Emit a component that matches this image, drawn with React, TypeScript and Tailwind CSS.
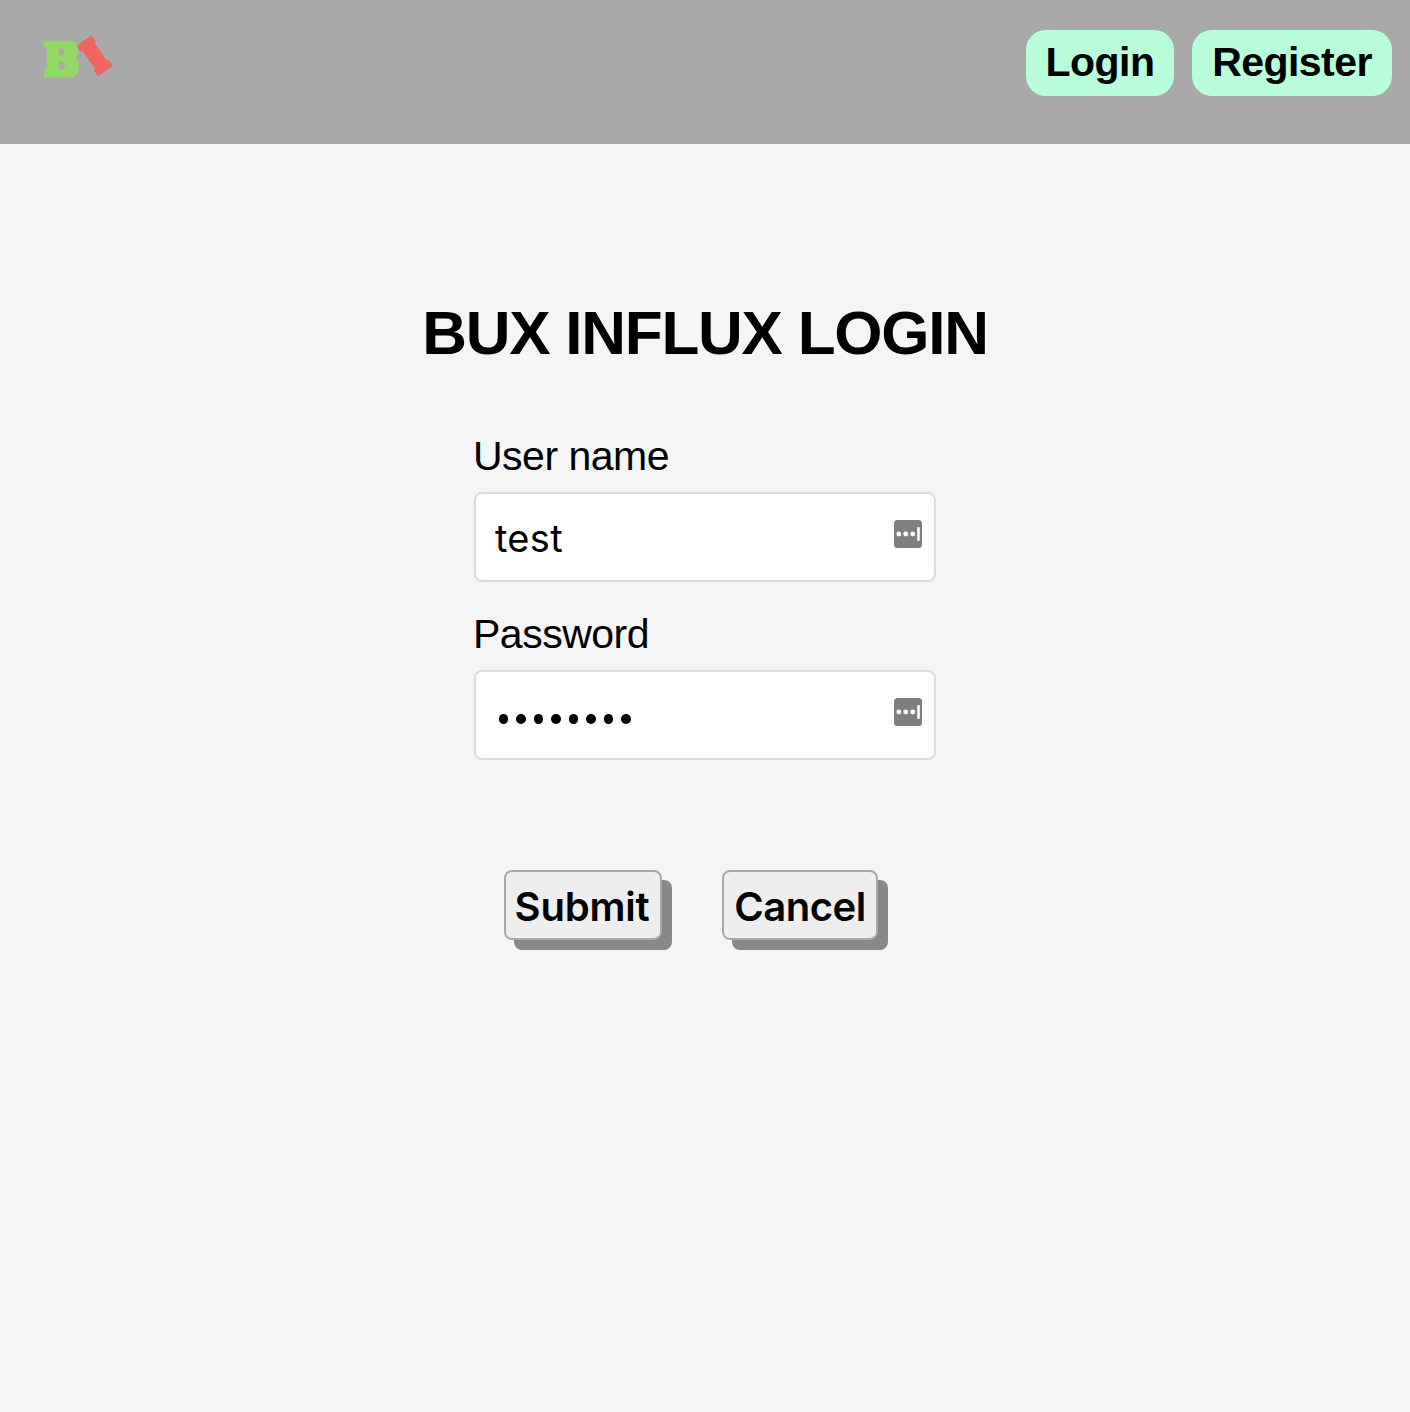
import { useState } from "react";

function Logo() {
  return (
    <svg className="h-[60px] w-20" viewBox="40 30 80 60" role="img" aria-label="Bux Influx">
      <g fill="#93d966">
        <rect x="44.3" y="41" width="12" height="6.5" rx="0.6" />
        <rect x="44.3" y="70.6" width="12" height="6.4" rx="0.6" />
        <rect x="46.8" y="41" width="20" height="36" />
        <rect x="56" y="41" width="21.8" height="19" rx="7" />
        <rect x="56" y="56.5" width="22.8" height="20.5" rx="7.8" />
      </g>
      <g fill="#a9a9a9">
        <rect x="58.9" y="48.4" width="5.6" height="7.2" rx="2" />
        <rect x="58.9" y="48.4" width="3" height="7.2" />
        <rect x="58.9" y="61.5" width="5.8" height="8" rx="2" />
        <rect x="58.9" y="61.5" width="3" height="8" />
      </g>
      <g fill="#ef665f" transform="translate(94.8 55.8) rotate(-35)">
        <rect x="-9.2" y="-18.6" width="18.4" height="7.6" rx="0.6" />
        <rect x="-7.2" y="-14" width="14.4" height="28" />
        <rect x="-9.2" y="11" width="18.4" height="7.6" rx="0.6" />
      </g>
    </svg>
  );
}

function FillIcon() {
  return (
    <svg className="pointer-events-none absolute right-[14px] top-7 size-7" viewBox="0 0 28 28" aria-hidden="true">
      <rect width="28" height="28" rx="3.5" fill="#7f7f7f" />
      <g fill="#fff">
        <circle cx="4.8" cy="14" r="2.4" />
        <circle cx="11.7" cy="14" r="2.4" />
        <circle cx="18.7" cy="14" r="2.4" />
        <rect x="23.2" y="7" width="2.6" height="14" rx="1" />
      </g>
    </svg>
  );
}

function UserField() {
  const [value, setValue] = useState("test");
  return (
    <label className="block">
      <span className="-ml-px block h-[72px] text-[41px] leading-[72px] tracking-[-0.5px]">User name</span>
      <span className="relative block">
        <input
          className="block h-[90px] w-full rounded-lg border-2 border-[#dcdcdc] bg-white pl-[19px] pr-14 pt-0.5 font-['Inter',sans-serif] text-[38px] tracking-[0.3px] outline-none"
          value={value}
          onChange={(e) => setValue(e.target.value)}
        />
        <FillIcon />
      </span>
    </label>
  );
}

function PasswordField() {
  return (
    <div className="mt-4">
      <span className="-ml-px block h-[72px] text-[41px] leading-[72px] tracking-[-0.5px]">Password</span>
      <div className="relative flex h-[90px] items-center gap-2 rounded-lg border-2 border-[#dcdcdc] bg-white pl-[22.5px] pt-2">
        {Array.from({ length: 8 }, (_, i) => (
          <span key={i} className="size-[9.5px] rounded-full bg-black" />
        ))}
        <span className="absolute -right-0.5 -top-0.5 block">
          <FillIcon />
        </span>
      </div>
    </div>
  );
}

const action =
  "h-[70px] rounded-lg border-2 border-[#a9a9a9] bg-[#eeeeee] pt-1 text-center font-['Inter',sans-serif] text-[40px] font-semibold leading-none shadow-[10px_10px_0_#888888]";

export default function App() {
  return (
    <div className="min-h-screen bg-[#f5f5f5] font-['Liberation_Sans',sans-serif] text-black">
      <header className="flex h-36 items-start justify-between bg-[#a9a9a9] pl-10 pr-[18px] pt-[30px]">
        <Logo />
        <nav className="flex gap-[18px] text-[41px] font-bold leading-[64px] tracking-[-0.55px]">
          <a className="h-[66px] w-[148px] rounded-[20px] bg-[#b9fedb] text-center" href="#login">Login</a>
          <a className="h-[66px] w-[200px] rounded-[20px] bg-[#b9fedb] text-center" href="#register">Register</a>
        </nav>
      </header>
      <main className="flex flex-col items-center pt-[154px]">
        <h1 className="text-[62px] font-bold leading-[70px] tracking-[-1.25px]">BUX INFLUX LOGIN</h1>
        <form className="mt-[52px] w-[462px]" onSubmit={(e) => e.preventDefault()}>
          <UserField />
          <PasswordField />
          <div className="mt-[110px] flex gap-[60px] pl-[30px]">
            <button type="submit" className={`${action} w-[158px] pr-0.5 tracking-[-0.2px]`}>Submit</button>
            <button type="button" className={`${action} w-[156px] tracking-[-0.5px]`}>Cancel</button>
          </div>
        </form>
      </main>
    </div>
  );
}
